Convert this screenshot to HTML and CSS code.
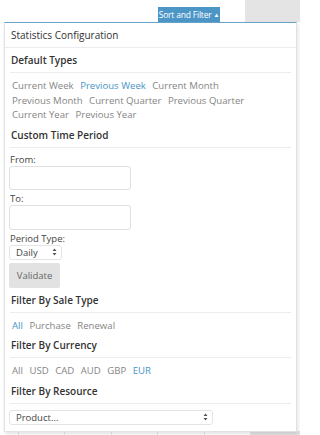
FILE: index.html
```html
<!DOCTYPE html>
<html>
<head>
<meta charset="utf-8">
<link rel="stylesheet" href="styles.css">
</head>
<body>
<div class="topbar">
  <div class="sort-btn">Sort and Filter <span class="tri">▲</span></div>
  <div class="bg-block"></div>
</div>
<div class="panel">
  <div class="panel-head">Statistics Configuration</div>
  <div class="panel-body">
    <div class="sec-title">Default Types</div>
    <div class="opts">
      <span class="opt">Current Week</span><span class="opt active">Previous Week</span><span class="opt">Current Month</span><br>
      <span class="opt">Previous Month</span><span class="opt">Current Quarter</span><span class="opt">Previous Quarter</span><br>
      <span class="opt">Current Year</span><span class="opt">Previous Year</span>
    </div>
    <div class="sec-title">Custom Time Period</div>
    <div class="form">
      <div class="lbl first">From:</div>
      <div class="input"></div>
      <div class="lbl">To:</div>
      <div class="input tall"></div>
      <div class="lbl">Period Type:</div>
      <div class="select small">
        <span>Daily</span>
        <svg class="arr" width="5" height="8" viewBox="0 0 5 8"><path d="M2.5 0.5 L4.5 3 L0.5 3 Z M2.5 7.5 L4.5 5 L0.5 5 Z" fill="#555"/></svg>
      </div>
      <div class="validate">Validate</div>
    </div>
    <div class="sec-title">Filter By Sale Type</div>
    <div class="opts">
      <span class="opt active">All</span><span class="opt">Purchase</span><span class="opt">Renewal</span>
    </div>
    <div class="sec-title">Filter By Currency</div>
    <div class="opts">
      <span class="opt">All</span><span class="opt">USD</span><span class="opt">CAD</span><span class="opt">AUD</span><span class="opt">GBP</span><span class="opt active">EUR</span>
    </div>
    <div class="sec-title">Filter By Resource</div>
    <div class="select wide">
      <span>Product...</span>
      <svg class="arr" width="5" height="8" viewBox="0 0 5 8"><path d="M2.5 0.5 L4.5 3 L0.5 3 Z M2.5 7.5 L4.5 5 L0.5 5 Z" fill="#555"/></svg>
    </div>
  </div>
</div>
<div class="bottom-strip">
  <span></span><span></span><span></span><span></span><span></span><div class="bs-gray"></div>
</div>
</body>
</html>
```
FILE: styles.css
```css
html, body {
  margin: 0;
  padding: 0;
  background: #fff;
  font-family: "Open Sans", "Liberation Sans", sans-serif;
  width: 300px;
  height: 435px;
  overflow: hidden;
}
.topbar {
  display: flex;
  height: 22px;
  padding-left: 158px;
}
.sort-btn {
  margin-top: 7px;
  width: 62px;
  height: 15px;
  background: #4b95c7;
  color: #fff;
  font-size: 8.5px;
  line-height: 15px;
  text-align: center;
  letter-spacing: -0.2px;
  white-space: nowrap;
}
.sort-btn .tri {
  font-size: 6px;
  vertical-align: 1px;
}
.bg-block {
  margin-left: auto;
  width: 55px;
  height: 22px;
  background: #e4e4e4;
}
.panel {
  margin-left: 4px;
  width: 291px;
  height: 408px;
  background: #fff;
  border: 1px solid #e2e2e2;
  border-top: 1px solid #6aa3c9;
  box-shadow: 1px 2px 4px rgba(0,0,0,0.12);
  box-sizing: content-box;
  position: relative;
  z-index: 1;
}
.panel-head {
  height: 24px;
  line-height: 24px;
  padding-left: 6px;
  font-size: 10px;
  color: #333;
  border-bottom: 1px solid #ececec;
}
.panel-body {
  padding: 0 5px;
}
.sec-title {
  padding: 6px 0 6px 1px;
  line-height: 12px;
  font-size: 10px;
  font-weight: 600;
  color: #333;
  border-bottom: 1px solid #ececec;
}
.opts {
  margin-top: 6px;
  padding-left: 2px;
  font-size: 9.6px;
  line-height: 14.5px;
  color: #858585;
  white-space: nowrap;
}
.opt {
  margin-right: 6.5px;
}
.opt.active {
  color: #4a94c6;
}
.form {
  padding-top: 6px;
}
.lbl {
  font-size: 9.5px;
  line-height: 12px;
  color: #444;
  margin-top: 3px;
}
.lbl.first {
  margin-top: 0;
}
.input {
  margin-left: -1px;
  width: 120px;
  height: 22px;
  border: 1px solid #e0e0e0;
  border-radius: 3px;
  background: #fff;
}
.input.tall {
  height: 23px;
}
.select {
  margin-left: -1px;
  display: flex;
  align-items: center;
  justify-content: space-between;
  height: 13px;
  border: 1px solid #e4e4e4;
  border-radius: 3px;
  background: #fff;
  font-size: 9.5px;
  color: #444;
  padding: 0 4px 0 6px;
}
.select.small {
  width: 41px;
  margin-top: 0;
}
.select.wide {
  width: 192px;
  margin-top: 6px;
}
.arr {
  display: block;
}
.validate {
  margin-top: 3px;
  margin-left: -1px;
  width: 51px;
  height: 25px;
  line-height: 25px;
  text-align: center;
  background: #e2e2e2;
  color: #666;
  font-size: 9.5px;
  border-radius: 2px;
}
.bottom-strip {
  display: flex;
  height: 4px;
  margin-top: -1px;
  padding-left: 18px;
}
.bottom-strip span {
  width: 50px;
  border-left: 1px solid #e6e6e6;
  height: 4px;
}
.bs-gray {
  margin-left: auto;
  width: 55px;
  background: #e4e4e4;
}
```
